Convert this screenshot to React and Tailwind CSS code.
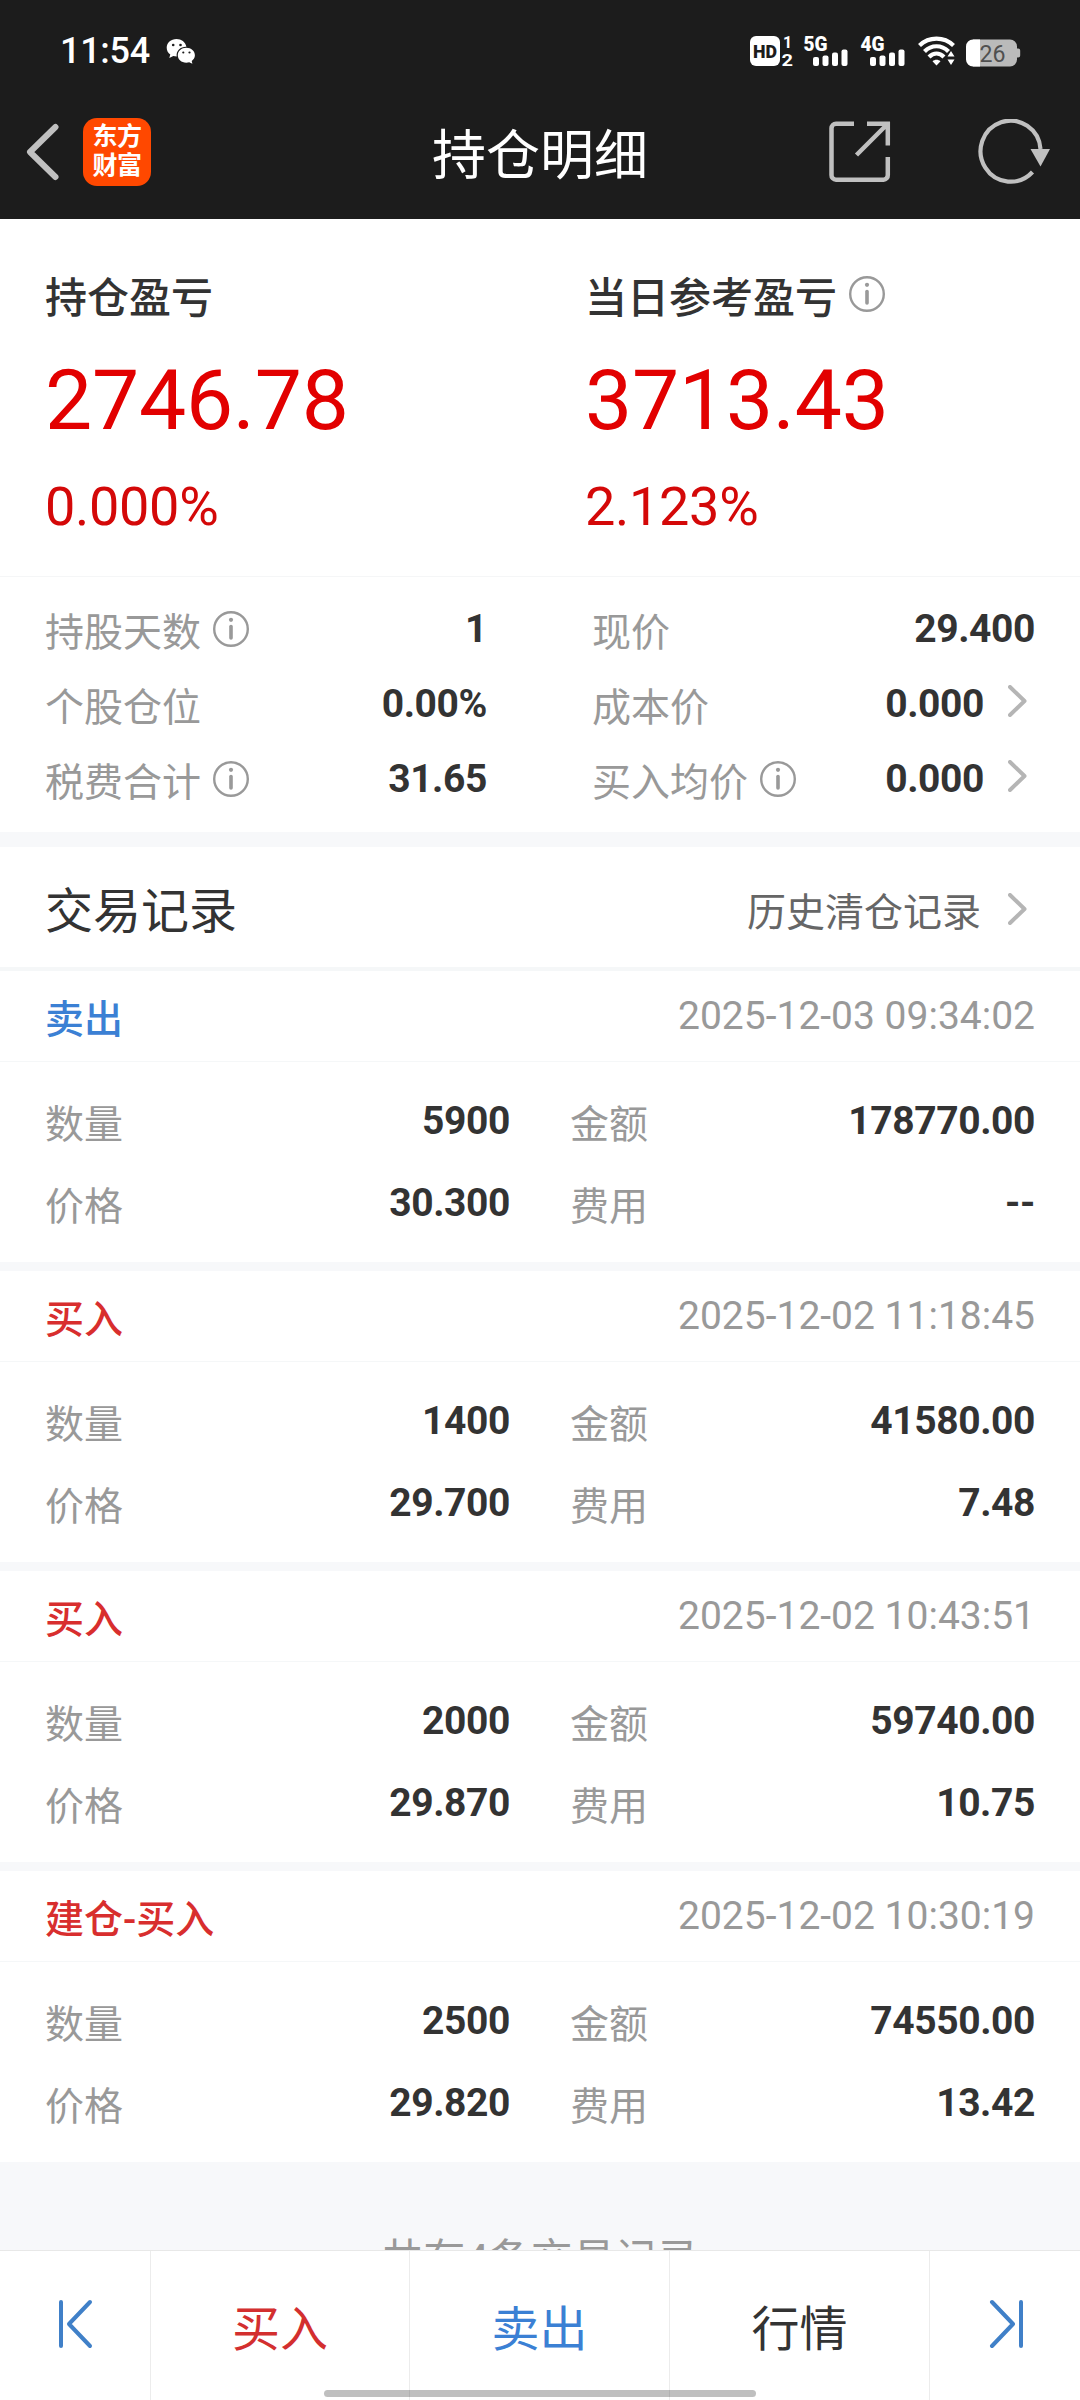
const stats = [
  [
    { label: '持股天数', value: '1', info: true },
    { label: '个股仓位', value: '0.00%' },
    { label: '税费合计', value: '31.65', info: true },
  ],
  [
    { label: '现价', value: '29.400' },
    { label: '成本价', value: '0.000', link: true },
    { label: '买入均价', value: '0.000', info: true, link: true },
  ],
];

const records = [
  { type: '卖出', side: 'sell', time: '2025-12-03 09:34:02', qty: '5900', price: '30.300', amount: '178770.00', fee: '--' },
  { type: '买入', side: 'buy', time: '2025-12-02 11:18:45', qty: '1400', price: '29.700', amount: '41580.00', fee: '7.48' },
  { type: '买入', side: 'buy', time: '2025-12-02 10:43:51', qty: '2000', price: '29.870', amount: '59740.00', fee: '10.75' },
  { type: '建仓-买入', side: 'buy', time: '2025-12-02 10:30:19', qty: '2500', price: '29.820', amount: '74550.00', fee: '13.42' },
];

function InfoIcon() {
  return (
    <svg width="36" height="36" viewBox="0 0 36 36" fill="none" className="flex-shrink-0 text-[#999999]">
      <circle cx="18" cy="18" r="16.8" stroke="currentColor" strokeWidth="2.4" />
      <circle cx="18" cy="8.8" r="2.1" fill="currentColor" />
      <path d="M18 15.5V27" stroke="currentColor" strokeWidth="3.6" strokeLinecap="round" />
    </svg>
  );
}

function Chevron() {
  return (
    <svg width="19" height="32" viewBox="0 0 19 32" fill="none" className="flex-shrink-0">
      <path d="M2 2L16.5 16L2 30" stroke="#b5b5b5" strokeWidth="4" strokeLinecap="round" strokeLinejoin="round" />
    </svg>
  );
}

function Signal({ label }) {
  return (
    <svg width="45" height="32" viewBox="0 0 45 32" fill="#fff" className="overflow-visible">
      <text x="-0.5" y="15.5" fontSize="20" fontWeight="900" textLength="24" lengthAdjust="spacingAndGlyphs">{label}</text>
      <rect x="9" y="22" width="6" height="9" rx="2" />
      <rect x="18.5" y="20.5" width="6" height="10.5" rx="2" />
      <rect x="28" y="17.5" width="6" height="13.5" rx="2" />
      <rect x="37.5" y="14.5" width="6" height="16.5" rx="2" />
    </svg>
  );
}

function StatusBar() {
  return (
    <div className="flex h-[84px] items-center pt-[18px] pl-[60px] pr-[59px] text-white">
      <span className="text-[36px] font-medium leading-[44px] tracking-[-0.3px]">11:54</span>
      <svg width="30" height="26" viewBox="0 0 30 26" className="ml-4">
        <path d="M10.5 1C4.9 1 .7 4.8 .7 9.7c0 2.9 1.4 5.2 3.6 6.8l-1 3.6 4-2.1c1.2.3 2.2.5 3.4.5C9.9 12.6 14.6 8.5 20.4 8.7 19.4 4.1 15.4 1 10.5 1Z" fill="#fff" />
        <path d="M20.3 9.8c-4.9 0-8.5 3.4-8.5 7.5s3.6 7.4 8.5 7.4c1.1 0 2-.2 2.9-.4l3.2 1.5-.7-2.9c1.9-1.4 3.2-3.3 3.2-5.6 0-4.1-3.7-7.5-8.6-7.5Z" fill="#fff" />
        <circle cx="7.2" cy="7" r="1.3" fill="#1c1c1c" />
        <circle cx="14.5" cy="7" r="1.3" fill="#1c1c1c" />
        <circle cx="17.3" cy="14.5" r="1.1" fill="#1c1c1c" />
        <circle cx="23.5" cy="14.5" r="1.1" fill="#1c1c1c" />
      </svg>
      <div className="ml-auto flex items-center">
        <svg width="44" height="32" viewBox="0 0 44 32" fill="#fff" className="mr-[10px] overflow-visible">
          <rect x="0" y="1" width="30" height="30" rx="6" />
          <text x="3" y="23" fontSize="19" fontWeight="900" fill="#1c1c1c" textLength="24" lengthAdjust="spacingAndGlyphs">HD</text>
          <text x="33" y="12.5" fontSize="16" fontWeight="700">1</text>
          <text x="31.5" y="30.5" fontSize="17" fontWeight="700" textLength="11.5" lengthAdjust="spacingAndGlyphs">2</text>
        </svg>
        <Signal label="5G" />
        <span className="w-3" />
        <Signal label="4G" />
        <svg width="38" height="30" viewBox="0 0 38 30" fill="none" className="ml-3">
          <g stroke="#fff" strokeWidth="4.2">
            <path d="M1.5 9.5C11 .3 26 .3 35.5 9.5" />
            <path d="M6.5 15.5C13.5 8.5 23.5 8.5 30.5 15.5" />
            <path d="M11 21C15.5 16.5 21.5 16.5 26 21" />
          </g>
          <path d="M18.5 29.5L14.5 25.2C16.8 23.2 20.2 23.2 22.5 25.2Z" fill="#fff" />
          <path d="M33 15L36.5 20.500H29.500ZM33 29L29.5 23.5H36.5Z" fill="#fff" />
        </svg>
        <svg width="55" height="28" viewBox="0 0 55 28" className="ml-[10px] mt-[3px] overflow-visible">
          <path d="M7 .5H44a7 7 0 0 1 7 7V9.5h1.2a2 2 0 0 1 2 2v5a2 2 0 0 1-2 2H51v2a7 7 0 0 1-7 7H7Z" fill="#bababa" />
          <path d="M14 .5H7a7 7 0 0 0-7 7v13a7 7 0 0 0 7 7h7Z" fill="#fff" />
          <text x="13.5" y="22.5" fontSize="24" fill="#505050" textLength="26" lengthAdjust="spacingAndGlyphs">26</text>
        </svg>
      </div>
    </div>
  );
}

function NavBar() {
  return (
    <div className="grid h-[135px] grid-cols-3 items-center">
      <div className="flex items-center pl-[26px]">
        <svg width="34" height="58" viewBox="0 0 34 58" fill="none">
          <path d="M29.5 4L4 29L29.5 54" stroke="#c0c0c0" strokeWidth="6" strokeLinecap="round" strokeLinejoin="round" />
        </svg>
        <div className="ml-[23px] flex h-[68px] w-[68px] flex-col items-center justify-center rounded-[14px] bg-[#ff4800] pb-px text-[25px] font-bold leading-[29px] tracking-[-0.5px] text-white">
          <span>东方</span>
          <span>财富</span>
        </div>
      </div>
      <h1 className="pt-[10px] text-center text-[54px] leading-[72px] text-white">持仓明细</h1>
      <div className="flex items-center justify-end pr-[29px]">
        <svg width="62" height="62" viewBox="0 0 62 62" fill="none" stroke="#c0c0c0" strokeWidth="4.5">
          <path d="M25 2.8H7A4.5 4.5 0 0 0 2.5 7.3V54A4.5 4.5 0 0 0 7 58.7H54.5A4.5 4.5 0 0 0 58.8 54V36" />
          <path d="M38 2.8H58.8V24.5M57 4.5L27.5 34" />
        </svg>
        <svg width="73" height="66" viewBox="0 0 73 66" fill="none" className="ml-[87px]">
          <path d="M54.5 53A30 30.5 0 1 1 62.5 30" stroke="#c0c0c0" strokeWidth="4.2" />
          <path d="M52.5 30H72L62.5 47.5Z" fill="#c0c0c0" />
        </svg>
      </div>
    </div>
  );
}

function ProfitCard({ label, value, percent, info }) {
  return (
    <div className="pl-[45px]">
      <div className="flex h-[60px] items-center">
        <span className="pt-[3px] text-[42px] font-medium leading-[55px] text-[#333333]">{label}</span>
        {info && <span className="mb-[6px] ml-3"><InfoIcon /></span>}
      </div>
      <div className="mt-[26px] text-[84px] leading-[96px] tracking-[-0.25px] text-[#e20000]">{value}</div>
      <div className="mt-[26px] text-[54px] leading-[64px] tracking-[-0.3px] text-[#d40808]">{percent}</div>
    </div>
  );
}

function StatRow({ label, value, info, link }) {
  return (
    <div className="flex h-[75px] items-center">
      <span className="pt-2 text-[39px] leading-[60px] text-[#999999]">{label}</span>
      {info && <span className="ml-3"><InfoIcon /></span>}
      <span className="ml-auto text-[39px] font-bold leading-[60px] tracking-[-0.4px] text-[#333333]">{value}</span>
      {link && <span className="mb-[5px] ml-6 mr-2"><Chevron /></span>}
    </div>
  );
}

function Field({ label, value }) {
  return (
    <div className="flex h-[82px] items-center justify-between">
      <span className="pt-2 text-[39px] leading-[60px] text-[#999999]">{label}</span>
      <span className="text-[39px] font-bold leading-[60px] tracking-[-0.4px] text-[#333333]">{value}</span>
    </div>
  );
}

function Record({ record }) {
  return (
    <div className="h-[291px] bg-white">
      <div className="flex h-[91px] items-center justify-between border-b border-[#f5f7f8] px-[45px] text-[39px] leading-[60px]">
        <span className={`pt-2 font-medium ${record.side === 'sell' ? 'text-[#3b80d4]' : 'text-[#d82e2e]'}`}>{record.type}</span>
        <span className="text-[#999999]">{record.time}</span>
      </div>
      <div className="grid grid-cols-[465px_465px] gap-x-[60px] px-[45px] pt-[18px]">
        <Field label="数量" value={record.qty} />
        <Field label="金额" value={record.amount} />
        <Field label="价格" value={record.price} />
        <Field label="费用" value={record.fee} />
      </div>
    </div>
  );
}

function BottomBar() {
  return (
    <div className="relative flex h-[150px] flex-shrink-0 border-t border-[#e8e8e8] bg-white text-[48px] leading-[64px]">
      <button className="flex w-[151px] items-center border-r border-[#ececec] pb-1 pl-[58px]">
        <svg width="36" height="50" viewBox="0 0 36 50" fill="none" stroke="#4080c8" strokeWidth="4" strokeLinecap="round" strokeLinejoin="round">
          <path d="M3 3V47M32 3L11 25L32 47" />
        </svg>
      </button>
      <button className="w-[259px] border-r border-[#ececec] pt-2 text-[#d32f2f]">买入</button>
      <button className="w-[260px] border-r border-[#ececec] pt-2 text-[#3b80d4]">卖出</button>
      <button className="w-[260px] border-r border-[#ececec] pt-2 text-[#333333]">行情</button>
      <button className="flex w-[150px] items-center justify-end pb-1 pr-[56px]">
        <svg width="36" height="50" viewBox="0 0 36 50" fill="none" stroke="#4080c8" strokeWidth="4" strokeLinecap="round" strokeLinejoin="round">
          <path d="M33 3V47M4 3L25 25L4 47" />
        </svg>
      </button>
      <div className="absolute bottom-[3px] left-[324px] h-[7px] w-[432px] rounded-full bg-black/25" />
    </div>
  );
}

export default function App() {
  return (
    <div className="flex h-[2400px] w-[1080px] flex-col overflow-hidden bg-[#f7f8fa] font-[Roboto,'Noto_Sans_CJK_SC',sans-serif]">
      <header className="h-[219px] flex-shrink-0 bg-[#1c1c1c]">
        <StatusBar />
        <NavBar />
      </header>

      <section className="grid h-[358px] flex-shrink-0 grid-cols-2 border-b border-[#f5f6f7] bg-white pt-[48px]">
        <ProfitCard label="持仓盈亏" value="2746.78" percent="0.000%" />
        <ProfitCard label="当日参考盈亏" value="3713.43" percent="2.123%" info />
      </section>

      <section className="grid h-[255px] flex-shrink-0 grid-cols-[442px_443px] gap-x-[105px] bg-white px-[45px] pt-[14px]">
        {stats.map((column, i) => (
          <div key={i}>
            {column.map((s) => <StatRow key={s.label} {...s} />)}
          </div>
        ))}
      </section>

      <section className="mt-[15px] flex h-[124px] flex-shrink-0 items-center border-b-4 border-[#f5f7f8] bg-white pl-[45px] pr-[53px]">
        <h2 className="pt-[10px] text-[48px] leading-[64px] text-[#333333]">交易记录</h2>
        <span className="ml-auto pt-3 text-[39px] leading-[60px] text-[#666666]">历史清仓记录</span>
        <span className="ml-[27px] mt-1"><Chevron /></span>
      </section>

      <div className="flex flex-shrink-0 flex-col gap-[9px]">
        {records.map((r) => <Record key={r.time} record={r} />)}
      </div>

      <div className="min-h-0 flex-1 overflow-hidden pt-[66px] text-center text-[42px] leading-[64px] text-[#999999]">
        共有4条交易记录
      </div>
      <BottomBar />
    </div>
  );
}
